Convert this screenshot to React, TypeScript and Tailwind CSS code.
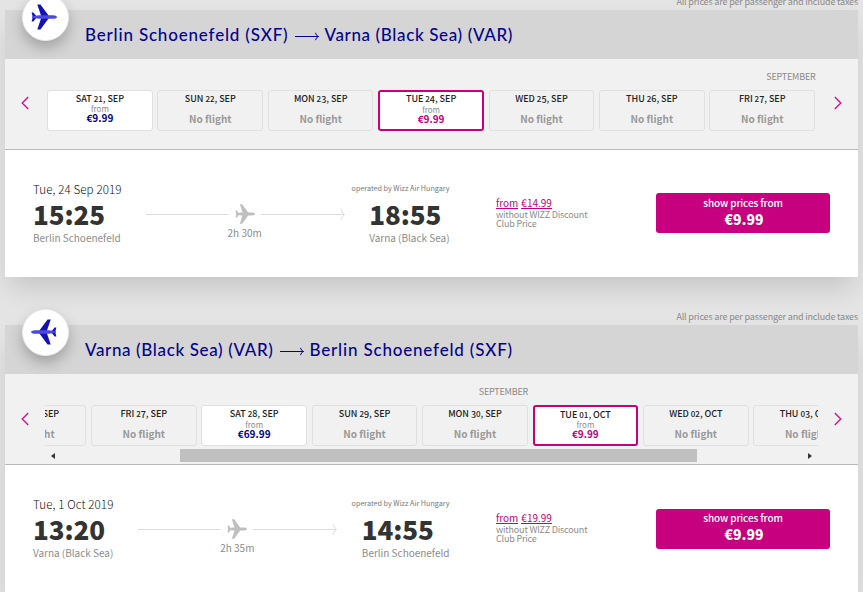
type Day = { label: string; price?: string; selected?: boolean };

const outboundDays: Day[] = [
  { label: "SAT 21, SEP", price: "€9.99" },
  { label: "SUN 22, SEP" },
  { label: "MON 23, SEP" },
  { label: "TUE 24, SEP", price: "€9.99", selected: true },
  { label: "WED 25, SEP" },
  { label: "THU 26, SEP" },
  { label: "FRI 27, SEP" },
];

const inboundDays: Day[] = [
  { label: "THU 26, SEP" },
  { label: "FRI 27, SEP" },
  { label: "SAT 28, SEP", price: "€69.99" },
  { label: "SUN 29, SEP" },
  { label: "MON 30, SEP" },
  { label: "TUE 01, OCT", price: "€9.99", selected: true },
  { label: "WED 02, OCT" },
  { label: "THU 03, OCT" },
];

/* Day label with old-style figures. */
function DayLabel({ text }: { text: string }) {
  return (
    <>
      {text.split("").map((c, i) => {
        if ("012".includes(c)) return <span key={i} className="text-[8px] leading-none tracking-normal">{c}</span>;
        if ("34579".includes(c)) return <span key={i} className="align-[-1px] leading-none">{c}</span>;
        return c;
      })}
    </>
  );
}

function DayTile({ day, low }: { day: Day; low?: boolean }) {
  const lowered = low && day.selected;
  const box = day.selected
    ? `border-2 border-[#c6007e] bg-white ${lowered ? "pt-[3px]" : "pt-[2px]"}`
    : day.price
      ? "border border-[#e0e0e0] bg-white pt-[3px]"
      : "border border-[#e0e0e0] bg-[#f1f1f1] pt-[3px]";
  const fromGap = lowered ? "mt-px" : low || day.selected ? "mt-[2px]" : "mt-px";
  return (
    <div className={`flex h-[41px] w-[105.6px] shrink-0 flex-col items-center rounded-[3px] text-center ${box}`}>
      <div className="h-[10px] whitespace-nowrap text-[9px] font-medium leading-[10px] tracking-[-0.05px] text-[#222]">
        <DayLabel text={day.label} />
      </div>
      {day.price ? (
        <>
          <div className={`text-[8px] leading-[8px] text-[#8c8c8c] ${fromGap}`}>from</div>
          <div className={`text-[10px] font-bold leading-[10px] ${day.selected ? "text-[#c6007e]" : "text-[#06038d]"}`}>{day.price}</div>
        </>
      ) : (
        <div className="mt-[10px] text-[10px] font-bold leading-[10px] text-[#999]">No flight</div>
      )}
    </div>
  );
}

const WINGS = "M17.6 11.6 9.4.4H6.3L10 11.6V14.4L6.3 25.6H9.4L17.6 14.4ZM5.2 12 2.4 8.4H.6L1.8 13 .6 17.6H2.4L5.2 14Z";
const BODY = "M26 13C26 12.1 24 11.2 22 11.2H8L1 12.3V13.7L8 14.8H22C24 14.8 26 13.9 26 13Z";

function Plane({ className, wing, body }: { className: string; wing: string; body: string }) {
  return (
    <svg viewBox="0 0 26 26" className={className}>
      <path d={WINGS} fill={wing} />
      <path d={BODY} fill={body} />
    </svg>
  );
}

function Chevron({ left }: { left?: boolean }) {
  return (
    <svg viewBox="0 0 8 14" className={`h-[14px] w-2 ${left ? "" : "rotate-180"}`} fill="none" stroke="#d60a8a" strokeWidth="1.3">
      <path d="M7.2 1 1.2 7l6 6" />
    </svg>
  );
}

function Note() {
  return <span className="whitespace-nowrap text-[9px] leading-[12px] tracking-[-0.165px] text-[#8a8a8a]">All prices are per passenger and include taxes</span>;
}

type FlightProps = {
  from: string;
  to: string;
  fromTrack: string;
  toTrack: string;
  fromCity: string;
  toCity: string;
  date: string;
  depart: string;
  arrive: string;
  duration: string;
  standard: string;
  days: Day[];
  inbound?: boolean;
};

function FlightCard(p: FlightProps) {
  return (
    <section className="relative h-[267px] w-[853px] shadow-[0_15px_25px_-5px_rgba(0,0,0,0.14)]">
      <div className="absolute left-[16.5px] top-[-16.500px] flex size-[47px] items-center justify-center rounded-full border border-[#ececec] bg-white shadow-[0_7px_14px_rgba(0,0,0,0.24)]">
        <Plane className={`-ml-[2px] -mt-[1px] size-[26px] ${p.inbound ? "-scale-x-100" : ""}`} wing="#1512b4" body="#4a48e2" />
      </div>

      <header className="flex h-[49px] items-center gap-[6px] bg-[#d5d5d5] pl-[80px] pt-px font-['Lato',sans-serif] text-[17px] font-medium text-[#06038d]">
        <h2 className={`whitespace-nowrap ${p.fromTrack}`}>{p.from}</h2>
        <svg viewBox="0 0 24 9" className="mt-[3px] h-[9px] w-6 shrink-0" fill="none" stroke="#06038d">
          <path d="M0 4.5H23.5M20.5.8C21 2.5 22 4 23.5 4.5 22 5 21 6.500 20.500 8.200" />
        </svg>
        <h2 className={`whitespace-nowrap ${p.toTrack}`}>{p.to}</h2>
      </header>

      <div className="flex h-[91px] border-b border-[#b9b9b9] bg-[#f1f1f1]">
        <div className={`flex w-[40px] shrink-0 justify-center ${p.inbound ? "pt-[38px]" : "pt-[37px]"}`}><Chevron left /></div>
        <div className="flex w-[773px] shrink-0 flex-col overflow-hidden">
          <div className={`h-[31px] pt-[12px] text-right text-[9px] leading-[12px] tracking-[-0.2px] text-[#8a8a8a] ${p.inbound ? "pr-[290px]" : "pr-[2.500px]"}`}>SEPTEMBER</div>
          <div className={`flex gap-[4.8px] ${p.inbound ? "-ml-[64.4px]" : "ml-[2.1px]"}`}>
            {p.days.map((d) => <DayTile key={d.label} day={d} low={p.inbound} />)}
          </div>
          {p.inbound && (
            <div className="mt-[3px] flex h-[13px] items-center">
              <span className="ml-[6px] size-0 border-y-[3.5px] border-r-4 border-y-transparent border-r-[#333]" />
              <span className="ml-[125px] h-[13px] w-[517px] bg-[#c0c0c0]" />
              <span className="ml-[111px] size-0 border-y-[3.5px] border-l-4 border-y-transparent border-l-[#333]" />
            </div>
          )}
        </div>
        <div className={`flex w-[40px] shrink-0 justify-center ${p.inbound ? "pt-[38px]" : "pt-[37px]"}`}><Chevron /></div>
      </div>

      <div className="flex h-[127px] bg-white pl-[28px]">
        <div className="flex w-[416.5px] shrink-0">
          <div className="shrink-0 pt-[32px]">
            <div className="w-0 whitespace-nowrap text-[11.600px] font-light leading-[14px] tracking-[0.1px] text-[#111]">{p.date}</div>
            <div className="mt-[4px] text-[26px] font-black leading-[28px] tracking-[-0.1px] text-[#333]">{p.depart}</div>
            <div className="mt-[4px] whitespace-nowrap text-[10px] leading-[12px] tracking-[-0.02px] text-[#8c8c8c]">{p.fromCity}</div>
          </div>
          <div className="ml-[25px] mr-[24.500px] flex flex-1 flex-col pt-[53px]">
            <div className="flex h-[22px] items-center">
              <span className="h-px flex-1 bg-[#dcdcdc]" />
              <Plane className="mx-[6px] size-[20px]" wing="#bfbfbf" body="#bfbfbf" />
              <svg viewBox="0 0 84 12" className="h-3 w-[84px]" fill="none" stroke="#dcdcdc">
                <path d="M0 6.500H83M80 .8C80.500 3 82 5.500 83.500 6.500 82 7.500 80.500 10 80 12" />
              </svg>
            </div>
            <div className="mt-[2px] pr-px text-center text-[10px] leading-[12px] text-[#8c8c8c]">{p.duration}</div>
          </div>
          <div className="shrink-0 pt-[33px]">
            <div className="flex h-[14px] justify-end pt-px">
              <span className="-ml-[40px] whitespace-nowrap text-[7.200px] leading-[9px] text-[#777]">operated by Wizz Air Hungary</span>
            </div>
            <div className="mt-[3px] text-[26px] font-black leading-[28px] tracking-[-0.1px] text-[#333]">{p.arrive}</div>
            <div className="mt-[4px] whitespace-nowrap text-[10px] leading-[12px] tracking-[-0.02px] text-[#8c8c8c]">{p.toCity}</div>
          </div>
        </div>
        <div className="ml-[46.5px] w-[160px] shrink-0 whitespace-nowrap pt-[47px] text-[9px] leading-[9px] tracking-[-0.180px] text-[#8c8c8c]">
          <div className="flex gap-[3px] text-[10px] leading-[12px] tracking-normal text-[#c6007e]">
            <span className="h-[12px] border-b border-[#c6007e]">from</span>
            <span className="h-[12px] border-b border-[#c6007e]">{p.standard}</span>
          </div>
          <div className="mt-px">without WIZZ Discount</div>
          <div>Club Price</div>
        </div>
        <button className={`flex h-[40px] w-[174px] shrink-0 flex-col items-center rounded-[3px] bg-[#c6007e] text-white ${p.inbound ? "mt-[44px]" : "mt-[43px]"}`}>
          <span className={`text-[10px] font-medium leading-[12px] tracking-[-0.13px] ${p.inbound ? "mt-[3px]" : "mt-[4px]"}`}>show prices from</span>
          <span className="ml-[2px] mt-[2px] text-[14px] font-black leading-[16px]">€9.99</span>
        </button>
      </div>
    </section>
  );
}

export default function App() {
  return (
    <main className="h-[592px] w-[863px] overflow-hidden bg-[#e4e4e4] pl-[5px] font-['Noto_Sans_CJK_SC',sans-serif]">
      <div className="flex h-[10px] w-[853px] items-end justify-end"><div className="mb-[2px] flex"><Note /></div></div>
      <FlightCard
        from="Berlin Schoenefeld (SXF)" fromTrack="tracking-[0.82px]"
        to="Varna (Black Sea) (VAR)" toTrack="tracking-[0.63px]"
        fromCity="Berlin Schoenefeld" toCity="Varna (Black Sea)"
        date="Tue, 24 Sep 2019" depart="15:25" arrive="18:55" duration="2h 30m"
        standard="€14.99" days={outboundDays}
      />
      <div className="flex h-[48px] w-[853px] items-end justify-end"><div className="mb-[2px] flex"><Note /></div></div>
      <FlightCard
        from="Varna (Black Sea) (VAR)" fromTrack="tracking-[0.63px]"
        to="Berlin Schoenefeld (SXF)" toTrack="tracking-[0.82px]"
        fromCity="Varna (Black Sea)" toCity="Berlin Schoenefeld"
        date="Tue, 1 Oct 2019" depart="13:20" arrive="14:55" duration="2h 35m"
        standard="€19.99" days={inboundDays} inbound
      />
    </main>
  );
}
